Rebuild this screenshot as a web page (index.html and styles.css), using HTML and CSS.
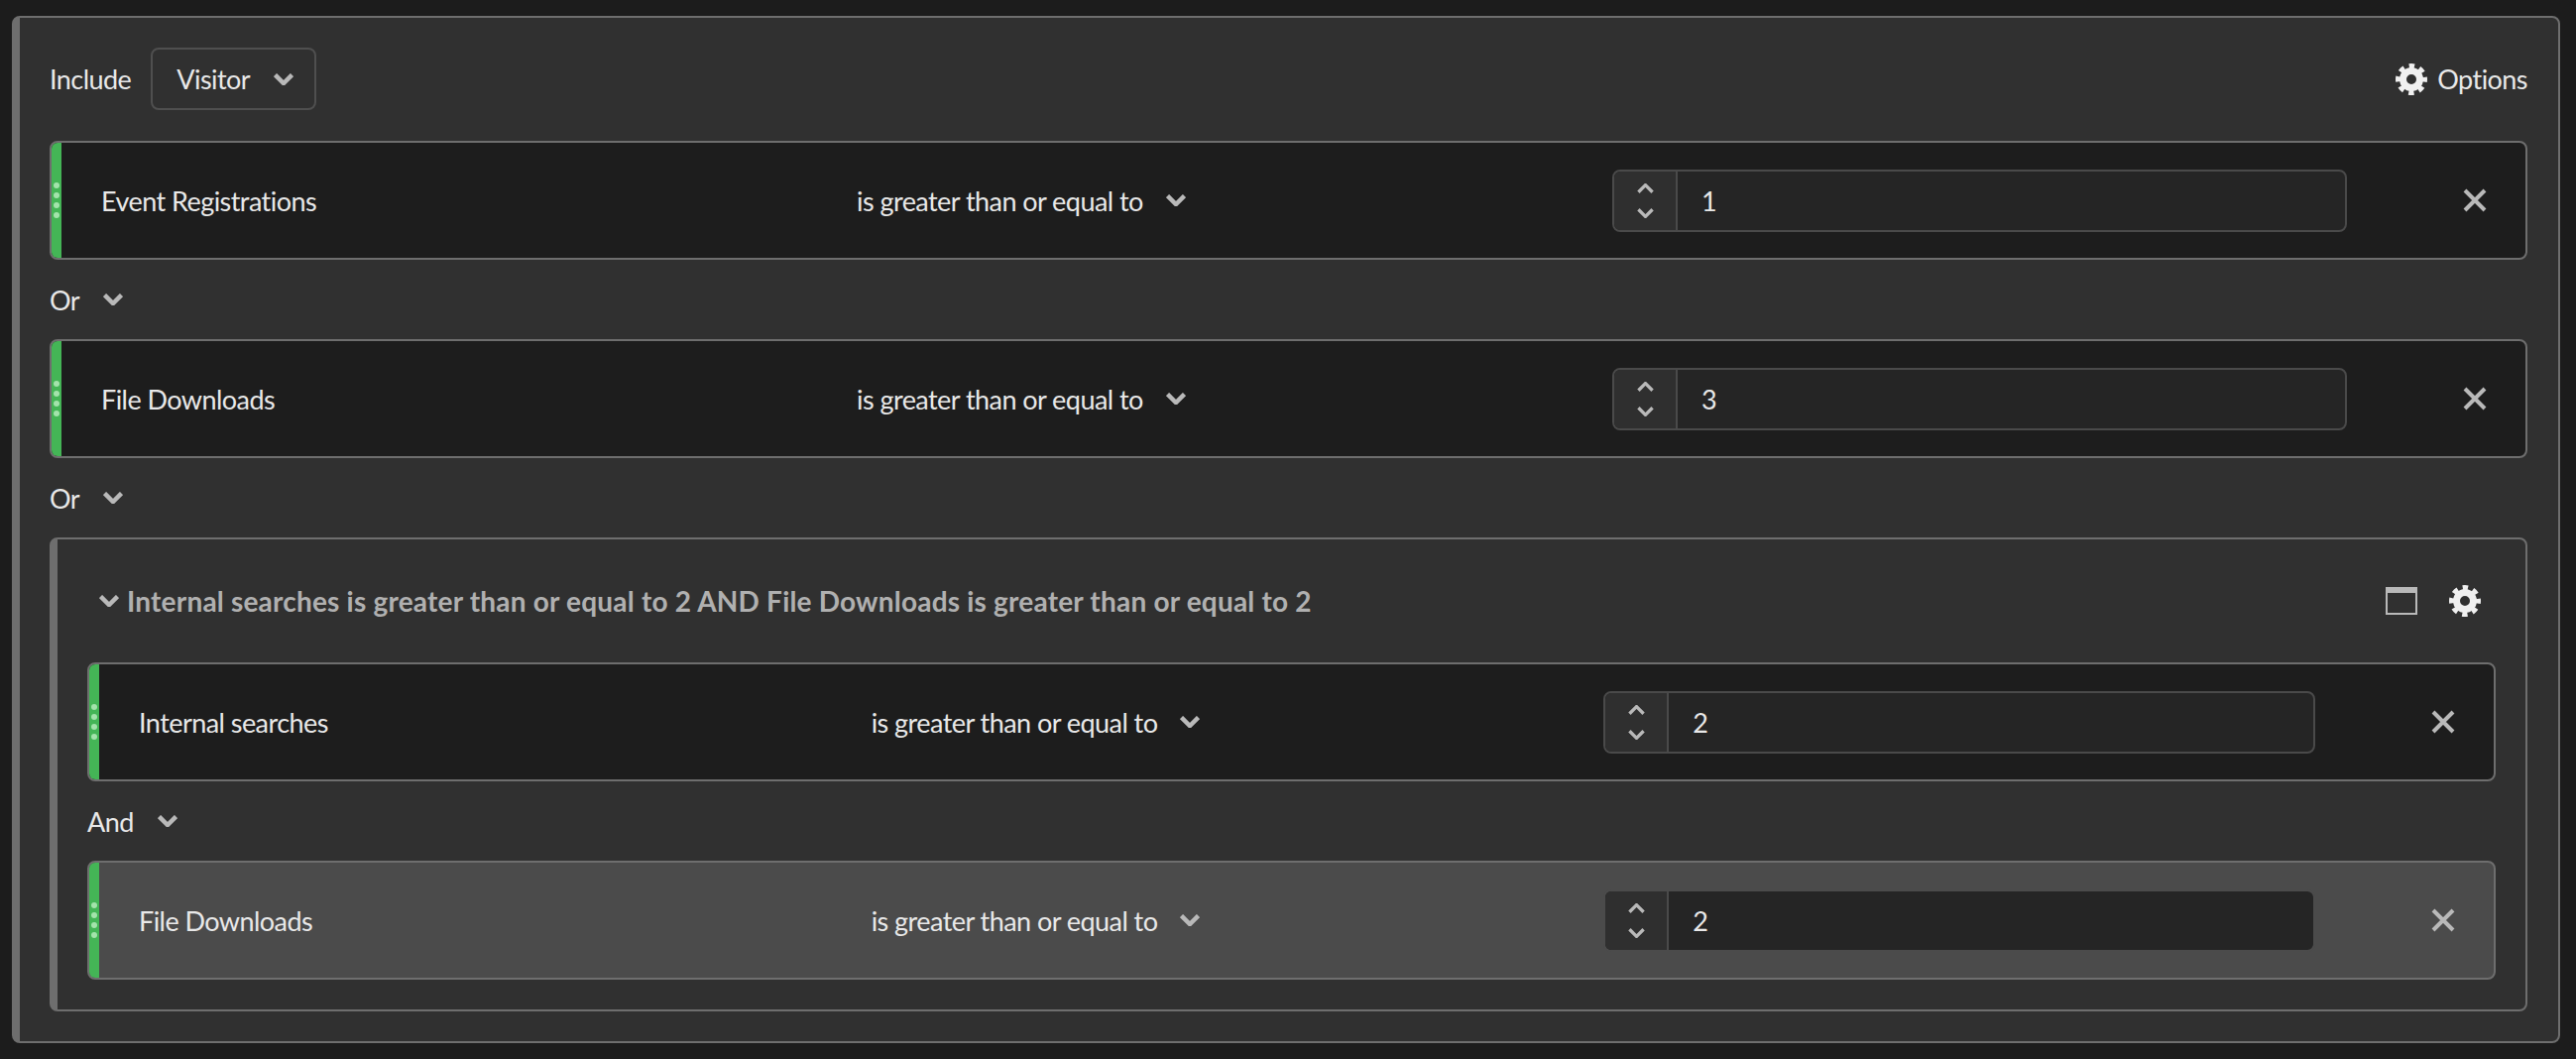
FILE: index.html
```html
<!DOCTYPE html>
<html>
	<head>
		<meta charset="utf-8">
		<title>Segment container</title>
		<link rel="stylesheet" href="styles.css">
	</head>
	<body>
		<svg class="defs" width="0" height="0">
			<symbol id="chevron" viewBox="0 0 20 12"><path d="M1.5 1.5l8.5 8.5 8.5-8.5"/></symbol>
			<symbol id="close" viewBox="0 0 24 24"><path d="M2 2l20 20M22 2L2 22"/></symbol>
			<symbol id="gear" viewBox="0 0 32 32">
				<circle class="gear-body" cx="16" cy="16" r="8.5"/>
				<circle class="gear-teeth" cx="16" cy="16" r="13.5"/>
			</symbol>
		</svg>
		<div class="panel">
			<div class="panel-header">
				<div class="scope">
					<span>Include</span>
					<button class="picker">Visitor <svg class="chevron"><use href="#chevron"/></svg></button>
				</div>
				<div class="options">
					<svg class="gear"><use href="#gear"/></svg>
					<span>Options</span>
				</div>
			</div>

			<div class="rule">
				<div class="grip"><i></i><i></i><i></i><i></i></div>
				<div class="rule-body">
					<span>Event Registrations</span>
					<div class="operator">is greater than or equal to <svg class="chevron"><use href="#chevron"/></svg></div>
					<div class="number">
						<div class="stepper"><svg class="step step-up"><use href="#chevron"/></svg><svg class="step"><use href="#chevron"/></svg></div>
						<span class="number-value">1</span>
					</div>
					<svg class="close"><use href="#close"/></svg>
				</div>
			</div>
			<div class="joiner">Or <svg class="chevron"><use href="#chevron"/></svg></div>
			<div class="rule">
				<div class="grip"><i></i><i></i><i></i><i></i></div>
				<div class="rule-body">
					<span>File Downloads</span>
					<div class="operator">is greater than or equal to <svg class="chevron"><use href="#chevron"/></svg></div>
					<div class="number">
						<div class="stepper"><svg class="step step-up"><use href="#chevron"/></svg><svg class="step"><use href="#chevron"/></svg></div>
						<span class="number-value">3</span>
					</div>
					<svg class="close"><use href="#close"/></svg>
				</div>
			</div>
			<div class="joiner">Or <svg class="chevron"><use href="#chevron"/></svg></div>

			<div class="group">
				<div class="group-header">
					<svg class="chevron"><use href="#chevron"/></svg>
					<span class="group-title">Internal searches is greater than or equal to 2 AND File Downloads is greater than or equal to 2</span>
					<div class="group-tools">
						<svg class="window" viewBox="0 0 32 28"><path class="window-frame" d="M1 1h30v26H1z"/><path class="window-bar" d="M0 0h32v6H0z"/></svg>
						<svg class="gear"><use href="#gear"/></svg>
					</div>
				</div>
				<div class="rule">
					<div class="grip"><i></i><i></i><i></i><i></i></div>
					<div class="rule-body">
						<span>Internal searches</span>
						<div class="operator">is greater than or equal to <svg class="chevron"><use href="#chevron"/></svg></div>
						<div class="number">
							<div class="stepper"><svg class="step step-up"><use href="#chevron"/></svg><svg class="step"><use href="#chevron"/></svg></div>
							<span class="number-value">2</span>
						</div>
						<svg class="close"><use href="#close"/></svg>
					</div>
				</div>
				<div class="joiner">And <svg class="chevron"><use href="#chevron"/></svg></div>
				<div class="rule rule-hover">
					<div class="grip"><i></i><i></i><i></i><i></i></div>
					<div class="rule-body">
						<span>File Downloads</span>
						<div class="operator">is greater than or equal to <svg class="chevron"><use href="#chevron"/></svg></div>
						<div class="number">
							<div class="stepper"><svg class="step step-up"><use href="#chevron"/></svg><svg class="step"><use href="#chevron"/></svg></div>
							<span class="number-value">2</span>
						</div>
						<svg class="close"><use href="#close"/></svg>
					</div>
				</div>
			</div>
		</div>
	</body>
</html>
```

FILE: styles.css
```css
* {
	box-sizing: border-box;
}

body {
	margin: 0;
	padding: 16px 16px 16px 12px;
	background-color: #1c1c1c;
	color: #e8e8e8;
	font-family: Lato, "Open Sans", sans-serif;
	font-size: 27px;
	letter-spacing: -0.55px;
}

.defs {
	position: absolute;
}

svg {
	display: block;
	flex: none;
}

.chevron {
	width: 20px;
	height: 12px;
	fill: none;
	stroke: #b9b9b9;
	stroke-width: 4.5;
}

.gear {
	width: 32px;
	height: 32px;
}

.gear-body {
	fill: none;
	stroke: #f0f0f0;
	stroke-width: 7;
}

.gear-teeth {
	fill: none;
	stroke: #f0f0f0;
	stroke-width: 5;
	stroke-dasharray: 5.4 5.2;
	stroke-dashoffset: 2.7;
}

.close {
	width: 24px;
	height: 24px;
	justify-self: end;
	fill: none;
	stroke: #b9b9b9;
	stroke-width: 4;
}

.panel {
	border: 2px solid #6e6e6e;
	border-left-width: 8px;
	border-radius: 8px;
	background-color: #303030;
	padding: 30px 31px 30px 30px;
}

.panel-header {
	display: flex;
	align-items: center;
	justify-content: space-between;
	height: 63px;
	margin-bottom: 31px;
}

.scope {
	display: flex;
	align-items: center;
	gap: 20px;
}

.picker {
	display: flex;
	align-items: center;
	gap: 24px;
	width: 167px;
	height: 63px;
	padding: 0 0 0 24px;
	border: 2px solid #4f4f4f;
	border-radius: 8px;
	background: transparent;
	color: inherit;
	font: inherit;
	letter-spacing: inherit;
}

.options {
	display: flex;
	align-items: center;
	gap: 10px;
}

.rule {
	display: flex;
	height: 120px;
	border: 2px solid #6e6e6e;
	border-radius: 8px;
	background-color: #1d1d1d;
	overflow: hidden;
}

.rule-hover {
	background-color: #4b4b4b;
}

.grip {
	display: flex;
	flex-direction: column;
	align-items: center;
	justify-content: center;
	gap: 4px;
	width: 10px;
	background-color: #44b556;
}

.grip i {
	width: 6px;
	height: 6px;
	border-radius: 50%;
	background-color: #a3e3ab;
}

.rule-body {
	flex: 1;
	display: grid;
	grid-template-columns: 1fr 1fr 1fr 120px;
	column-gap: 21px;
	align-items: center;
	padding: 0 39px 0 40px;
}

.operator {
	display: flex;
	align-items: center;
	gap: 23px;
}

.number {
	display: flex;
	height: 63px;
	border: 2px solid #4a4a4a;
	border-radius: 8px;
	background-color: #252525;
	overflow: hidden;
}

.rule-hover .number {
	border-color: #4b4b4b;
}

.stepper {
	display: flex;
	flex-direction: column;
	align-items: center;
	justify-content: center;
	gap: 15px;
	width: 64px;
	border-right: 2px solid #4a4a4a;
	background-color: #2f2f2f;
}

.step {
	width: 17px;
	height: 10px;
	fill: none;
	stroke: #b9b9b9;
	stroke-width: 4;
}

.step-up {
	transform: rotate(180deg);
}

.number-value {
	align-self: center;
	padding-left: 24px;
}

.joiner {
	display: flex;
	align-items: center;
	gap: 24px;
	height: 80px;
}

.group {
	border: 2px solid #6e6e6e;
	border-left-width: 8px;
	border-radius: 8px;
	padding: 0 30px 30px 30px;
}

.group-header {
	display: flex;
	align-items: center;
	gap: 8px;
	height: 124px;
	padding: 0 15px 0 12px;
}

.group-title {
	flex: 1;
	color: #b0b0b0;
	font-weight: 700;
	font-size: 28px;
	letter-spacing: 0.2px;
}

.group-tools {
	display: flex;
	align-items: center;
	gap: 32px;
}

.window {
	width: 32px;
	height: 28px;
}

.window-frame {
	fill: none;
	stroke: #b9b9b9;
	stroke-width: 2;
}

.window-bar {
	fill: #b9b9b9;
}
```
